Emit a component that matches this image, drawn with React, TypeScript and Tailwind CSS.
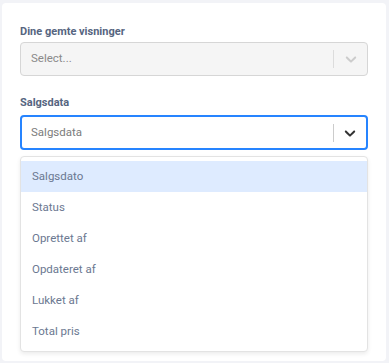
import React from 'react';

const options = ['Salgsdato', 'Status', 'Oprettet af', 'Opdateret af', 'Lukket af', 'Total pris'];

function Chevron({ className }: { className: string }) {
  return (
    <svg viewBox="0 0 20 20" width="20" height="20" className={className} fill="currentColor">
      <path d="M4.516 7.548c0.436-0.446 1.043-0.481 1.576 0l3.908 3.747 3.908-3.747c0.533-0.481 1.141-0.446 1.574 0 0.436 0.445 0.408 1.197 0 1.615-0.406 0.418-4.695 4.502-4.695 4.502-0.217 0.223-0.502 0.335-0.787 0.335s-0.57-0.112-0.789-0.335c0 0-4.287-4.084-4.695-4.502s-0.436-1.17 0-1.615z" />
    </svg>
  );
}

export default function App() {
  return (
    <div className="min-h-[363px] bg-[#f2f3f7] pt-[3px] pl-[2px] pr-[3px] pb-[2px]" style={{ fontFamily: 'Roboto, "Noto Sans", sans-serif' }}>
      <div className="bg-white rounded-[4px] min-h-[358px] px-[18px] pt-[21px]">
        {/* Saved views */}
        <label className="block text-[11px] font-bold leading-[16px] text-[#56657f]">Dine gemte visninger</label>
        <div className="mt-[2px] h-[34px] flex items-center rounded-[4px] border border-[#d6d6d6] bg-[#f5f5f5]">
          <span className="flex-1 pl-[10px] text-[11.5px] text-[#8a8a8a]">Select...</span>
          <span className="w-px h-[18px] bg-[#dcdcdc]" />
          <span className="w-[33px] flex justify-center text-[#cccccc]">
            <Chevron className="w-[18px] h-[18px]" />
          </span>
        </div>

        {/* Salgsdata */}
        <label className="block mt-[19px] text-[11px] font-bold leading-[16px] text-[#56657f]">Salgsdata</label>
        <div className="mt-[4px] h-[35px] flex items-center rounded-[4px] border-2 border-[#2684ff] bg-white">
          <span className="flex-1 pl-[9px] text-[11.5px] text-[#7c7c7c]">Salgsdata</span>
          <span className="w-px h-[18px] bg-[#cccccc]" />
          <span className="w-[32px] flex justify-center text-[#333333]">
            <Chevron className="w-[18px] h-[18px]" />
          </span>
        </div>

        <div className="mt-[6px] rounded-[4px] border border-[#e3e3e3] bg-white py-[4px] shadow-[0_2px_4px_rgba(0,0,0,0.08)]">
          {options.map((o, i) => (
            <div
              key={o}
              className={`h-[31px] flex items-center pl-[11px] text-[11.5px] text-[#6b7891] ${i === 0 ? 'bg-[#deebff]' : ''}`}
            >
              {o}
            </div>
          ))}
        </div>
      </div>
    </div>
  );
}
